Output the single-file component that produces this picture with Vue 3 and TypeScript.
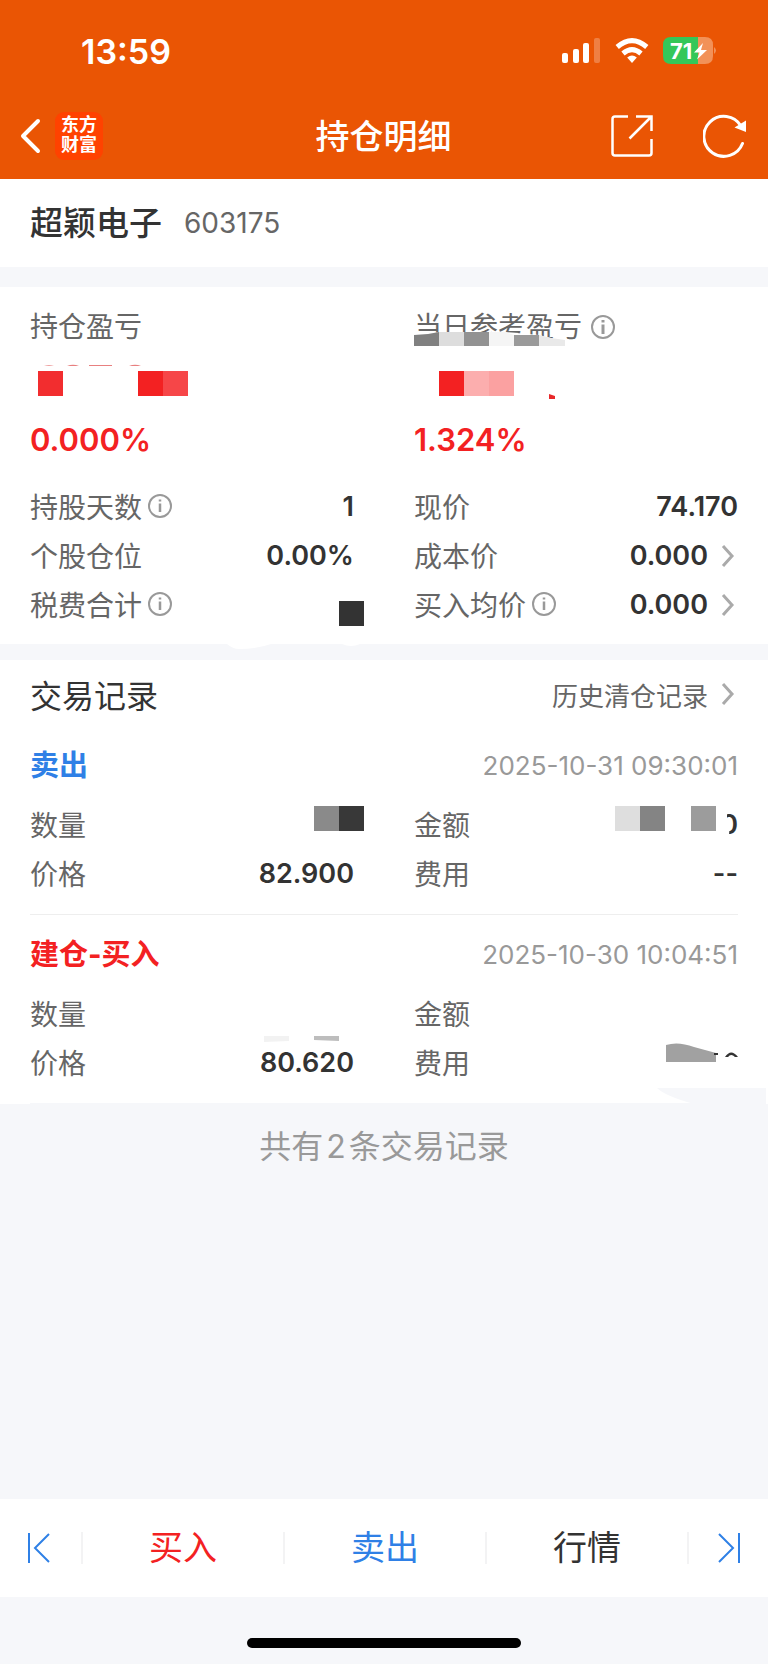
<script setup lang="ts">
interface Shape {
  d: string
  fill: string
}
interface Field {
  label: string
  value?: string
  info?: boolean
  link?: boolean
  cover?: Shape[]
}
interface TradeRecord {
  kind: 'sell' | 'buy'
  title: string
  time: string
  fields: Field[]
}

const box = (x: number, y: number, w = 25, h = 25): string => `M${x} ${y}h${w}v${h}h${-w}z`

const profitCover: Shape[] = [
  { d: box(8, 19), fill: '#f22d2f' },
  { d: box(108, 19), fill: '#f32122' },
  { d: box(133, 19), fill: '#f64648' },
  { d: 'M14 14q5-1.500 10 0zM37 14q6-2.500 12 0zM59 13h23v1h-23zM99 14q6-2.500 12 0z', fill: '#e88080' },
]

const dailyCover: Shape[] = [
  { d: box(25, 19), fill: '#f32122' },
  { d: box(50, 19), fill: '#fcaeae' },
  { d: box(75, 19), fill: '#fba1a1' },
  { d: 'M135 42l6 2v3h-6z', fill: '#e8282a' },
]

const labelCover: Shape[] = [
  { d: 'M0 3l14-1 11-2v14H0z', fill: '#808080' },
  { d: box(25, 0, 25, 14), fill: '#dddddd' },
  { d: box(50, 0, 25, 14), fill: '#929292' },
  { d: 'M75 0h16l9 3v11H75z', fill: '#f5f5f5' },
  { d: box(100, 3, 25, 11), fill: '#9a9a9a' },
  { d: 'M125 3l12 3 14 2v6h-26z', fill: '#e9e9e9' },
]

const holdings: Field[] = [
  { label: '持股天数', value: '1', info: true },
  { label: '现价', value: '74.170' },
  { label: '个股仓位', value: '0.00%' },
  { label: '成本价', value: '0.000', link: true },
  { label: '税费合计', info: true, cover: [{ d: box(309, 21), fill: '#333333' }] },
  { label: '买入均价', value: '0.000', info: true, link: true },
]

const records: TradeRecord[] = [
  {
    kind: 'sell',
    title: '卖出',
    time: '2025-10-31 09:30:01',
    fields: [
      {
        label: '数量',
        cover: [
          { d: box(284, 6), fill: '#8a8a8a' },
          { d: box(309, 6), fill: '#383838' },
        ],
      },
      {
        label: '金额',
        value: '0',
        cover: [
          { d: 'M296 6h17v11l3 6-1 12h-19z', fill: '#ffffff' },
          { d: box(201, 6), fill: '#dedede' },
          { d: box(226, 6), fill: '#848484' },
          { d: box(277, 6), fill: '#9c9c9c' },
        ],
      },
      { label: '价格', value: '82.900' },
      { label: '费用', value: '--' },
    ],
  },
  {
    kind: 'buy',
    title: '建仓-买入',
    time: '2025-10-30 10:04:51',
    fields: [
      {
        label: '数量',
        cover: [
          { d: 'M234 47h25v5l-25 1z', fill: '#f2f2f2' },
          { d: 'M284 47h25v5l-25-1z', fill: '#bdbdbd' },
        ],
      },
      { label: '金额' },
      { label: '价格', value: '80.620' },
      {
        label: '费用',
        cover: [
          { d: 'M252 7q12-4 28 2l22 6v9h-50z', fill: '#a1a1a1' },
          { d: 'M300 15h4v2h-4zM311 19q6-9 13 0h-3q-4-4-7 0z', fill: '#333333' },
        ],
      },
    ],
  },
]
</script>

<template>
  <div class="page">
    <header class="header">
      <div class="status">
        <time class="clock">13:59</time>
        <div class="indicators">
          <svg width="39" height="26" viewBox="0 0 39 26" fill="#fff" aria-hidden="true">
            <rect x="0" y="15" width="6" height="10" rx="2" />
            <rect x="11" y="11" width="6" height="14" rx="2" />
            <rect x="21" y="5" width="6" height="20" rx="2" />
            <rect x="32" y="0" width="6" height="25" rx="2" opacity=".25" />
          </svg>
          <svg class="wifi" width="34" height="26" viewBox="0 0 34 26" aria-hidden="true">
            <g fill="none" stroke="#fff" stroke-width="5">
              <path d="M2.200 9q14.800-12.800 29.600 0" />
              <path d="M8 15.500q9-7.800 18 0" />
            </g>
            <path d="M12.200 19.500q4.800-3.800 9.600 0L17 25z" fill="#fff" />
          </svg>
          <div class="battery">
            <svg width="56" height="28" viewBox="0 0 56 28" aria-hidden="true">
              <path d="M8 0h27v27H8q-8 0-8-8V8q0-8 8-8z" fill="#34c759" />
              <path d="M35 0h7q8 0 8 8v11q0 8-8 8h-7z" fill="#f29158" />
              <path d="M51 10q4 3.500 0 7z" fill="#f29158" />
              <path d="M40 6L31 15.500h5.500L34 22.500l10-9.500h-6z" fill="#fff" />
            </svg>
            <span class="level">71</span>
          </div>
        </div>
      </div>
      <nav class="nav">
        <div class="nav-side">
          <button class="icon-button" aria-label="返回">
            <svg width="22" height="36" viewBox="0 0 22 36" fill="none" stroke="#fff" stroke-width="4" stroke-linecap="round" stroke-linejoin="round">
              <path d="M18 3L3 18l15 15" />
            </svg>
          </button>
          <span class="logo">东方<br />财富</span>
        </div>
        <h1 class="title">持仓明细</h1>
        <div class="nav-side nav-actions">
          <button class="icon-button" aria-label="分享">
            <svg width="42" height="42" viewBox="0 0 42 42" fill="none" stroke="#fff" stroke-width="2.500">
              <path d="M17 1.500H4Q1.500 1.500 1.500 4v34q0 2.500 2.500 2.500h34q2.500 0 2.500-2.500V24M25 1.500h15.500V16M40 2L18.500 23.500" />
            </svg>
          </button>
          <button class="icon-button" aria-label="刷新">
            <svg width="44" height="44" viewBox="0 0 44 44" fill="none" stroke="#fff" stroke-width="3">
              <path d="M39.500 29.500A20 20 0 1 1 38 12" stroke-linecap="round" />
              <path d="M43 6.500v11.500l-11.500-4.500z" fill="#fff" stroke="none" />
            </svg>
          </button>
        </div>
      </nav>
    </header>

    <section class="stock">
      <h2 class="stock-name">超颖电子</h2>
      <span class="stock-code">603175</span>
    </section>

    <section class="summary">
      <div class="columns">
        <div>
          <div class="profit-label">持仓盈亏</div>
          <svg class="profit-value" width="324" height="54" viewBox="0 0 324 54" aria-hidden="true">
            <path v-for="shape in profitCover" :key="shape.d" :d="shape.d" :fill="shape.fill" />
          </svg>
          <div class="percent">0.000%</div>
        </div>
        <div>
          <div class="profit-label wide">
            当日参考盈亏
            <button class="info" aria-label="当日参考盈亏说明">
              <svg width="24" height="24" viewBox="0 0 24 24" fill="none" stroke="#999" stroke-width="2">
                <circle cx="12" cy="12" r="11" />
                <path d="M12 9.500V19M12 5v2.500" stroke-width="3" />
              </svg>
            </button>
            <svg class="label-cover" width="151" height="26" viewBox="0 0 151 26" aria-hidden="true">
              <path d="M0 3l14-1 11-2h66l34 3 12 3 14 2v18H0z" fill="#fff" />
              <path v-for="shape in labelCover" :key="shape.d" :d="shape.d" :fill="shape.fill" />
            </svg>
          </div>
          <svg class="profit-value" width="324" height="54" viewBox="0 0 324 54" aria-hidden="true">
            <path v-for="shape in dailyCover" :key="shape.d" :d="shape.d" :fill="shape.fill" />
          </svg>
          <div class="percent">1.324%</div>
        </div>
      </div>
      <dl class="columns fields">
        <div v-for="field in holdings" :key="field.label" class="field">
          <dt>
            {{ field.label }}
            <button v-if="field.info" class="info" :aria-label="field.label + '说明'">
              <svg width="24" height="24" viewBox="0 0 24 24" fill="none" stroke="#999" stroke-width="2">
                <circle cx="12" cy="12" r="11" />
                <path d="M12 9.500V18M12 5.500v2" stroke-width="2.500" />
              </svg>
            </button>
          </dt>
          <dd>
            {{ field.value }}
            <svg v-if="field.link" class="chevron" width="30" height="24" viewBox="0 0 30 24" aria-hidden="true">
              <path d="M15 2l9 10-9 10" />
            </svg>
          </dd>
          <svg v-if="field.cover" class="cover" width="334" height="54" viewBox="0 0 334 54" aria-hidden="true">
            <path v-for="shape in field.cover" :key="shape.d" :d="shape.d" :fill="shape.fill" />
          </svg>
        </div>
      </dl>
      <svg class="torn" width="140" height="6" viewBox="0 0 140 6" fill="#fff" aria-hidden="true">
        <path d="M0 0h44Q30 5 12 5 6 5 0 0zM115 0h18q-9 4-18 0z" />
      </svg>
    </section>

    <section class="records">
      <div class="records-head">
        <h2 class="records-title">交易记录</h2>
        <a class="history" href="#history">
          历史清仓记录
          <svg class="chevron" width="30" height="24" viewBox="0 0 30 24" aria-hidden="true">
            <path d="M15 2l9 10-9 10" />
          </svg>
        </a>
      </div>
      <article v-for="record in records" :key="record.time" class="record">
        <div class="record-head">
          <h3 :class="['record-title', record.kind]">{{ record.title }}</h3>
          <time class="record-time">{{ record.time }}</time>
        </div>
        <dl class="columns">
          <div v-for="field in record.fields" :key="field.label" class="field">
            <dt>{{ field.label }}</dt>
            <dd>{{ field.value }}</dd>
            <svg v-if="field.cover" class="cover" width="334" height="54" viewBox="0 0 334 54" aria-hidden="true">
              <path v-for="shape in field.cover" :key="shape.d" :d="shape.d" :fill="shape.fill" />
            </svg>
          </div>
        </dl>
      </article>
      <svg class="patch" width="109" height="16" viewBox="0 0 109 16" fill="#f6f7fa" aria-hidden="true">
        <path d="M0 0h109v16H37Q8 8 0 0z" />
      </svg>
    </section>

    <p class="total">共有<span class="count">2</span>条交易记录</p>

    <footer class="footer">
      <div class="toolbar">
        <button class="step" aria-label="上一个">
          <svg width="24" height="32" viewBox="0 0 24 32"><path d="M2 1v30M22 2L8 16l14 14" /></svg>
        </button>
        <button class="action buy">买入</button>
        <button class="action sell">卖出</button>
        <button class="action">行情</button>
        <button class="step" aria-label="下一个">
          <svg width="24" height="32" viewBox="0 0 24 32"><path d="M22 1v30M2 2l14 14L2 30" /></svg>
        </button>
      </div>
      <div class="home"></div>
    </footer>
  </div>
</template>

<style>
body {
  margin: 0;
  background: #f6f7fa;
}
</style>

<style scoped>
.page {
  display: flex;
  flex-direction: column;
  min-height: 100vh;
  background: #f6f7fa;
  color: #333;
  font-family: Inter, 'Noto Sans CJK SC', sans-serif;
  font-size: 28px;
}
h1, h2, h3, p, dl, dd {
  margin: 0;
}
button {
  padding: 0;
  border: 0;
  background: none;
  color: inherit;
  font: inherit;
}
svg {
  display: block;
  flex: none;
}
.header {
  padding-bottom: 9px;
  background: #ea5504;
  color: #fff;
}
.status {
  display: flex;
  align-items: center;
  justify-content: space-between;
  height: 102px;
  padding: 0 49px 0 81px;
}
.clock {
  font-size: 34px;
  font-weight: 600;
}
.indicators {
  display: flex;
  align-items: center;
}
.wifi {
  margin: 0 14px;
}
.battery {
  position: relative;
}
.level {
  position: absolute;
  top: 0;
  left: 7px;
  font-size: 22px;
  font-weight: 700;
  line-height: 28px;
}
.nav {
  display: flex;
  align-items: center;
  height: 68px;
  padding: 0 21px 0 20px;
}
.nav-side {
  display: flex;
  flex: 1;
  align-items: center;
  gap: 13px;
}
.nav-actions {
  justify-content: flex-end;
  gap: 50px;
}
.logo {
  padding: 3px 6px 5px;
  border-radius: 9px;
  background: #ff4200;
  font-size: 18px;
  font-weight: 700;
  line-height: 20px;
}
.title {
  padding-bottom: 4px;
  font-size: 34px;
  font-weight: 500;
}
.stock {
  display: flex;
  align-items: center;
  gap: 22px;
  height: 88px;
  padding: 0 30px;
  background: #fff;
}
.stock-name {
  padding-bottom: 4px;
  font-size: 33px;
  font-weight: 500;
}
.stock-code {
  color: #666;
}
.summary {
  position: relative;
  margin-top: 20px;
  padding: 15px 30px;
  background: #fff;
}
.columns {
  display: grid;
  grid-template-columns: 1fr 1fr;
  column-gap: 60px;
}
.profit-label {
  position: relative;
  display: flex;
  align-items: center;
  height: 50px;
  color: #666;
  line-height: 48px;
}
.label-cover {
  position: absolute;
  top: 30px;
  left: 0;
}
.percent {
  height: 68px;
  color: #f32122;
  font-size: 31px;
  font-weight: 600;
  line-height: 68px;
}
.info {
  margin-left: 6px;
}
.wide .info {
  margin-left: 9px;
}
.fields {
  margin-top: 8px;
}
.field {
  position: relative;
  display: flex;
  align-items: center;
  justify-content: space-between;
  height: 49px;
}
dt, dd {
  display: flex;
  align-items: center;
}
dt {
  padding-bottom: 2px;
  color: #666;
}
dd {
  font-size: 27px;
  font-weight: 600;
}
.chevron {
  fill: none;
  stroke: #aaa;
  stroke-width: 3;
}
.cover {
  position: absolute;
  top: 0;
  right: -10px;
}
.torn {
  position: absolute;
  top: 100%;
  left: 227px;
}
.records {
  position: relative;
  margin-top: 16px;
  padding: 0 30px;
  background: #fff;
}
.records-head {
  display: flex;
  align-items: center;
  justify-content: space-between;
  height: 64px;
  padding-top: 2px;
}
.records-title {
  font-size: 32px;
  font-weight: 400;
}
.history {
  display: flex;
  align-items: center;
  color: #666;
  font-size: 26px;
  text-decoration: none;
}
.record {
  padding: 4px 0 16px;
  border-bottom: 1px solid #eee;
}
.record + .record {
  border-color: #f6f7fa;
}
.record-head {
  display: flex;
  align-items: center;
  justify-content: space-between;
  height: 70px;
}
.record-title {
  padding-bottom: 4px;
  font-size: 29px;
  font-weight: 700;
}
.sell {
  color: #2f80e6;
}
.buy {
  color: #f32122;
}
.record-time {
  color: #999;
  font-size: 26px;
}
.patch {
  position: absolute;
  right: 2px;
  bottom: 0;
}
.total {
  flex: 1;
  padding-top: 20px;
  color: #999;
  font-size: 32px;
  line-height: 46px;
  text-align: center;
}
.count {
  margin: 0 3px;
}
.toolbar {
  display: flex;
  align-items: center;
  height: 98px;
  background: #fff;
}
.step {
  display: flex;
  justify-content: center;
  width: 81px;
  padding-right: 4px;
}
.step:last-child {
  width: 79px;
  padding: 0;
}
.step path {
  fill: none;
  stroke: #2f80e6;
  stroke-width: 2;
}
.action {
  flex: 1;
  height: 32px;
  border-left: 2px solid #f3f3f4;
  font-size: 34px;
  line-height: 32px;
}
.action:nth-child(4) {
  border-right: 2px solid #f3f3f4;
}
.home {
  width: 274px;
  height: 10px;
  margin: 41px auto 16px;
  border-radius: 5px;
  background: #000;
}
</style>
